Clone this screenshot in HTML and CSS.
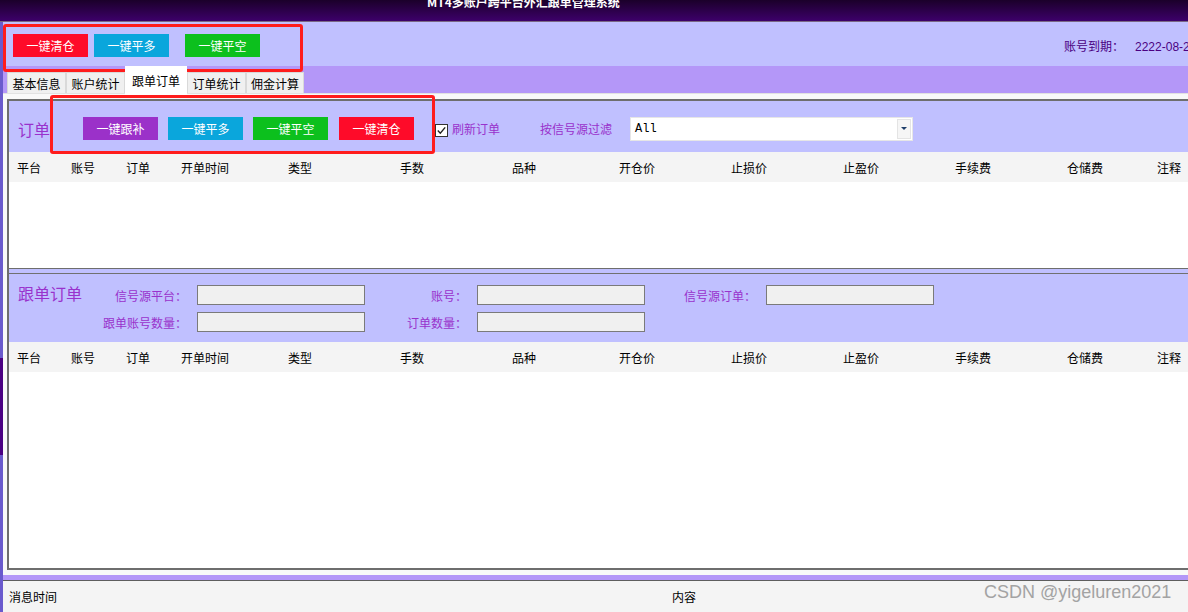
FILE: index.html
```html
<!DOCTYPE html>
<html lang="zh-CN">
<head>
<meta charset="utf-8">
<title>MT4多账户跨平台外汇跟单管理系统</title>
<link rel="stylesheet" href="styles.css">
</head>
<body>
<div class="app">
  <header class="titlebar"><span class="title">MT4多账户跨平台外汇跟单管理系统</span></header>
  <div class="main">
    <div class="edge"></div>
    <div class="content">
      <div class="toolbar">
        <button class="btn red">一键清仓</button>
        <button class="btn blue gap6">一键平多</button>
        <button class="btn green gap16">一键平空</button>
        <div class="expire"><span class="expire-label">账号到期：</span><span class="expire-date">2222-08-26</span></div>
      </div>
      <div class="tabband">
        <div class="tab w59">基本信息</div>
        <div class="tab w59">账户统计</div>
        <div class="tab active">跟单订单</div>
        <div class="tab w59">订单统计</div>
        <div class="tab w58">佣金计算</div>
      </div>
      <div class="tabpage">
        <div class="frame">
          <section class="upper">
            <div class="panelbar">
              <span class="sec-title">订单</span>
              <button class="btn purple">一键跟补</button>
              <button class="btn blue gap10">一键平多</button>
              <button class="btn green gap10">一键平空</button>
              <button class="btn red gap11">一键清仓</button>
              <span class="chk"><svg width="13" height="13" viewBox="0 0 13 13"><rect x="0.5" y="0.5" width="12" height="12" fill="#fff" stroke="#333"/><path d="M2.8 6.6 L5.3 9.2 L10.2 3.4" fill="none" stroke="#222" stroke-width="1.4"/></svg></span>
              <span class="chk-label">刷新订单</span>
              <span class="filter-label">按信号源过滤</span>
              <div class="combo"><span class="combo-text">All</span><span class="combo-arrow"><span class="tri"></span></span></div>
            </div>
            <div class="grid-head">
              <span class="c1">平台</span><span class="c2">账号</span><span class="c2">订单</span><span class="c4">开单时间</span><span class="c5">类型</span><span class="c5">手数</span><span class="c4">品种</span><span class="c5">开仓价</span><span class="c5">止损价</span><span class="c5">止盈价</span><span class="c5">手续费</span><span class="c12">仓储费</span><span>注释</span>
            </div>
            <div class="grid-body upper-body"></div>
          </section>
          <div class="splitter"></div>
          <section class="lower">
            <div class="formbar">
              <span class="sec-title form-title">跟单订单</span>
              <span class="flabel">信号源平台：</span>
              <span class="finput"></span>
              <span class="flabel">账号：</span>
              <span class="finput"></span>
              <span class="flabel">信号源订单：</span>
              <span class="finput"></span>
              <span></span>
              <span class="flabel">跟单账号数量：</span>
              <span class="finput"></span>
              <span class="flabel">订单数量：</span>
              <span class="finput"></span>
            </div>
            <div class="grid-head">
              <span class="c1">平台</span><span class="c2">账号</span><span class="c2">订单</span><span class="c4">开单时间</span><span class="c5">类型</span><span class="c5">手数</span><span class="c4">品种</span><span class="c5">开仓价</span><span class="c5">止损价</span><span class="c5">止盈价</span><span class="c5">手续费</span><span class="c12">仓储费</span><span>注释</span>
            </div>
            <div class="grid-body lower-body"></div>
          </section>
        </div>
      </div>
      <div class="sepband"></div>
      <div class="statusbar"><span class="st-time">消息时间</span><span>内容</span></div>
    </div>
  </div>
  <div class="annot a1"></div>
  <div class="annot a2"></div>
  <div class="watermark">CSDN @yigeluren2021</div>
</div>
</body>
</html>
```

FILE: styles.css
```css
* { box-sizing: border-box; margin: 0; padding: 0; }
html, body { width: 1188px; height: 612px; overflow: hidden; }
body {
  font-family: "Noto Sans CJK SC", "Liberation Sans", sans-serif;
  font-size: 12px;
  color: #000;
  background: #f0f0f0;
}
.app { position: relative; width: 1240px; height: 612px; display: flex; flex-direction: column; }

.titlebar {
  height: 22px;
  background: linear-gradient(#1b002a, #3d006a);
  border-bottom: 1px solid #7a6884;
  padding-left: 427px;
  overflow: hidden;
}
.title {
  display: block;
  margin-top: -4px;
  font-size: 12px;
  line-height: 12px;
  font-weight: bold;
  color: #fff;
  white-space: nowrap;
}

.main { flex: 1; display: flex; min-height: 0; }
.edge {
  width: 3px;
  background: linear-gradient(to bottom, #6a5acd 336px, #4b0082 336px, #4b0082 433px, #6a5acd 433px);
}
.content { flex: 1; display: flex; flex-direction: column; min-width: 0; }

.btn {
  width: 75px;
  height: 23px;
  border: 0;
  color: #fff;
  font: 12px/23px "Noto Sans CJK SC", sans-serif;
  text-align: center;
  flex: none;
}
.red { background: #fe0b29; }
.blue { background: #0aa6dc; }
.green { background: #0cc01d; }
.purple { background: #9b31c9; }
.gap6 { margin-left: 6px; }
.gap10 { margin-left: 10px; }
.gap11 { margin-left: 11px; }
.gap16 { margin-left: 16px; }

.toolbar {
  height: 44px;
  background: #c0c0ff;
  display: flex;
  align-items: flex-start;
  padding: 12px 0 0 10px;
}
.expire { margin-left: 804px; line-height: 23px; color: #4b0082; white-space: nowrap; }
.expire-label { font-size: 12px; }
.expire-date { margin-left: 11px; font: 12px "Liberation Sans", sans-serif; }

.tabband {
  height: 27px;
  background: #b497f8;
  display: flex;
  align-items: flex-end;
  padding-left: 4px;
}
.tab {
  height: 21px;
  border: 1px solid #d9d9d9;
  border-bottom: 0;
  background: #f0f0f0;
  text-align: center;
  line-height: 21px;
  flex: none;
}
.w59 { width: 59px; }
.w58 { width: 58px; }
.tab.active {
  width: 62px;
  height: 29px;
  line-height: 28px;
  background: #fff;
  border-color: #fff;
  margin-bottom: -2px;
  position: relative;
  z-index: 1;
}

.tabpage {
  height: 482px;
  background: #f9f9f9;
  border-top: 1px solid #e2e2e2;
  padding: 5px 0 0 4px;
}
.frame {
  height: 471px;
  border: 2px solid #6e6e6e;
  border-right: 0;
  background: #fff;
  display: flex;
  flex-direction: column;
}

.sec-title { font-size: 16px; color: #9932cc; line-height: 20px; }

.panelbar {
  height: 51px;
  background: #c0c0ff;
  display: flex;
  align-items: center;
  padding: 4px 0 0 9px;
}
.panelbar .sec-title { width: 65px; flex: none; }
.chk { margin-left: 21px; width: 13px; height: 13px; display: flex; margin-top: 3px; }
.chk-label { margin-left: 4px; color: #9932cc; }
.filter-label { margin-left: 40px; color: #9932cc; }
.combo {
  margin-left: 18px;
  width: 283px;
  height: 24px;
  background: #fff;
  border: 1px solid #e6e6e6;
  display: flex;
  align-items: center;
  justify-content: space-between;
  padding: 0 1px 0 4px;
}
.combo-text { font: 12px "Liberation Mono", monospace; }
.combo-arrow {
  width: 14px;
  height: 20px;
  background: #f6f6f6;
  border: 1px solid #e4e4e4;
  display: flex;
  align-items: center;
  justify-content: center;
}
.tri {
  width: 0;
  height: 0;
  border-left: 3px solid transparent;
  border-right: 3px solid transparent;
  border-top: 3px solid #1f3f6b;
}

.grid-head {
  height: 30px;
  background: #f4f4f4;
  display: flex;
  align-items: center;
  padding-left: 8px;
  white-space: nowrap;
  flex: none;
}
.c1 { width: 54px; }
.c2 { width: 55px; }
.c4 { width: 107px; }
.c5 { width: 112px; }
.c12 { width: 90px; }

.upper-body { height: 87px; background: #fff; border-bottom: 1px solid #6e6e6e; }
.splitter { height: 4px; background: #c0c0ff; flex: none; }
.lower { flex: 1; display: flex; flex-direction: column; border-top: 1px solid #707070; }
.lower-body { flex: 1; background: #fff; }

.formbar {
  height: 68px;
  background: #c0c0ff;
  display: grid;
  grid-template-columns: 79px 100px 168px 112px 168px 121px 168px;
  grid-template-rows: 20px 20px;
  row-gap: 7px;
  padding: 11px 0 0 9px;
  align-items: center;
  flex: none;
}
.form-title { align-self: start; margin-top: -2px; }
.flabel { text-align: right; padding-right: 10px; color: #9932cc; white-space: nowrap; }
.finput { height: 20px; background: #f0f0f0; border: 1px solid #7a7a7a; }

.sepband { height: 6px; background: #b497f8; border-bottom: 1px solid #5e5e5e; }
.statusbar {
  height: 31px;
  background: #f4f4f4;
  display: flex;
  align-items: center;
  padding-left: 6px;
}
.st-time { width: 663px; }

.annot {
  position: absolute;
  border: 3px solid #ff1c1c;
  border-radius: 3px;
  pointer-events: none;
}
.a1 { left: 3px; top: 24px; width: 300px; height: 48px; }
.a2 { left: 50px; top: 95px; width: 385px; height: 59px; }

.watermark {
  position: absolute;
  left: 984px;
  top: 580px;
  font: 18px/24px "Liberation Sans", sans-serif;
  color: #a3a3a3;
  white-space: nowrap;
}
```
